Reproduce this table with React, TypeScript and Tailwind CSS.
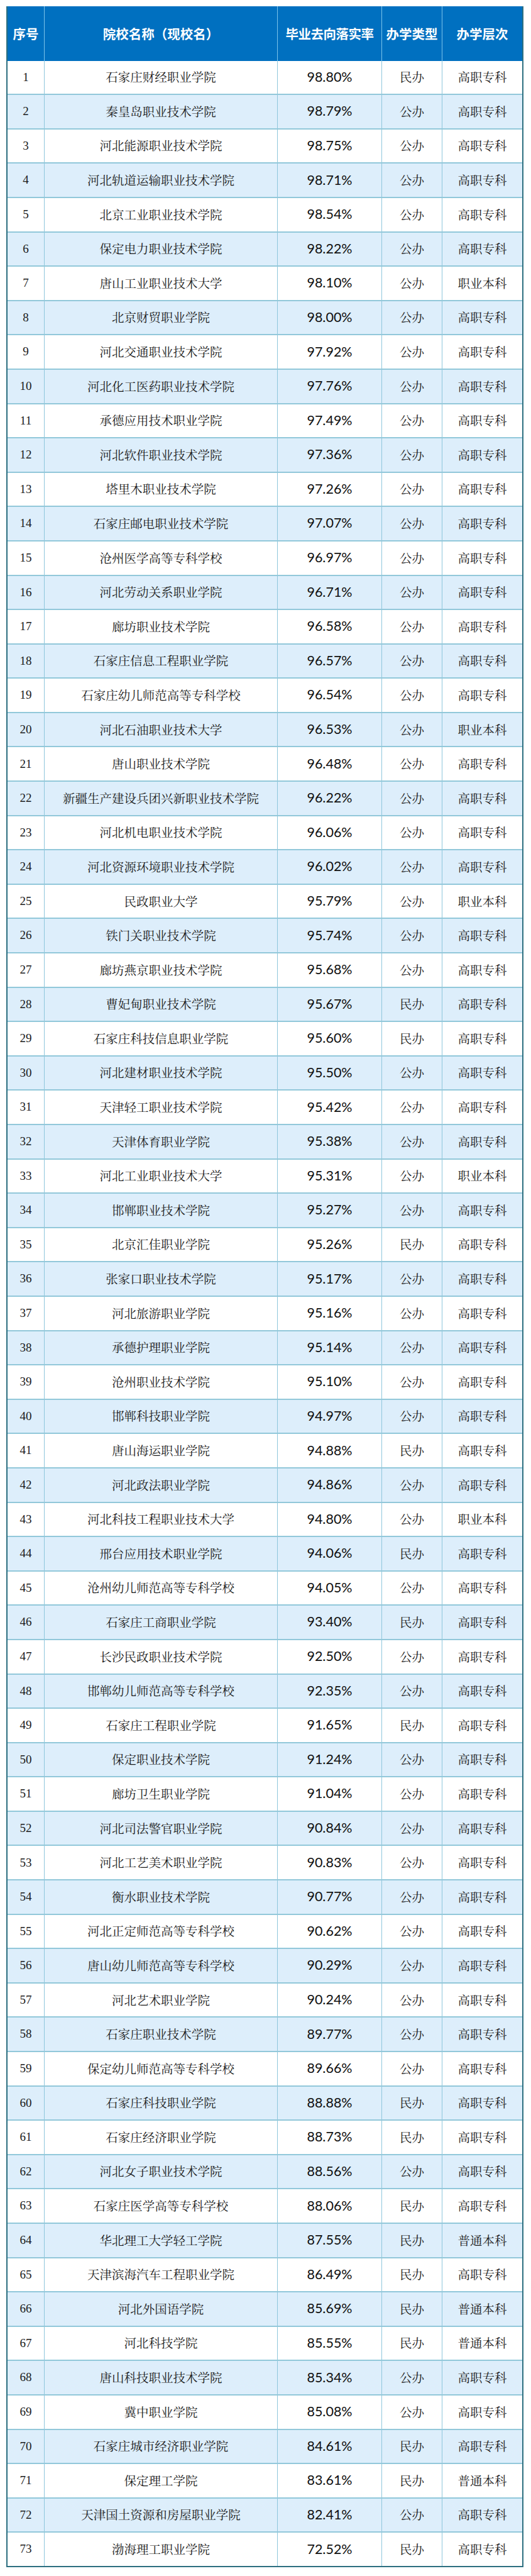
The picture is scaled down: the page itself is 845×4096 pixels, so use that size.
import React from "react";

type Row = [string, string, string, string];

const rows: Row[] = [
  ["石家庄财经职业学院", "98.80%", "民办", "高职专科"],
  ["秦皇岛职业技术学院", "98.79%", "公办", "高职专科"],
  ["河北能源职业技术学院", "98.75%", "公办", "高职专科"],
  ["河北轨道运输职业技术学院", "98.71%", "公办", "高职专科"],
  ["北京工业职业技术学院", "98.54%", "公办", "高职专科"],
  ["保定电力职业技术学院", "98.22%", "公办", "高职专科"],
  ["唐山工业职业技术大学", "98.10%", "公办", "职业本科"],
  ["北京财贸职业学院", "98.00%", "公办", "高职专科"],
  ["河北交通职业技术学院", "97.92%", "公办", "高职专科"],
  ["河北化工医药职业技术学院", "97.76%", "公办", "高职专科"],
  ["承德应用技术职业学院", "97.49%", "公办", "高职专科"],
  ["河北软件职业技术学院", "97.36%", "公办", "高职专科"],
  ["塔里木职业技术学院", "97.26%", "公办", "高职专科"],
  ["石家庄邮电职业技术学院", "97.07%", "公办", "高职专科"],
  ["沧州医学高等专科学校", "96.97%", "公办", "高职专科"],
  ["河北劳动关系职业学院", "96.71%", "公办", "高职专科"],
  ["廊坊职业技术学院", "96.58%", "公办", "高职专科"],
  ["石家庄信息工程职业学院", "96.57%", "公办", "高职专科"],
  ["石家庄幼儿师范高等专科学校", "96.54%", "公办", "高职专科"],
  ["河北石油职业技术大学", "96.53%", "公办", "职业本科"],
  ["唐山职业技术学院", "96.48%", "公办", "高职专科"],
  ["新疆生产建设兵团兴新职业技术学院", "96.22%", "公办", "高职专科"],
  ["河北机电职业技术学院", "96.06%", "公办", "高职专科"],
  ["河北资源环境职业技术学院", "96.02%", "公办", "高职专科"],
  ["民政职业大学", "95.79%", "公办", "职业本科"],
  ["铁门关职业技术学院", "95.74%", "公办", "高职专科"],
  ["廊坊燕京职业技术学院", "95.68%", "公办", "高职专科"],
  ["曹妃甸职业技术学院", "95.67%", "民办", "高职专科"],
  ["石家庄科技信息职业学院", "95.60%", "民办", "高职专科"],
  ["河北建材职业技术学院", "95.50%", "公办", "高职专科"],
  ["天津轻工职业技术学院", "95.42%", "公办", "高职专科"],
  ["天津体育职业学院", "95.38%", "公办", "高职专科"],
  ["河北工业职业技术大学", "95.31%", "公办", "职业本科"],
  ["邯郸职业技术学院", "95.27%", "公办", "高职专科"],
  ["北京汇佳职业学院", "95.26%", "民办", "高职专科"],
  ["张家口职业技术学院", "95.17%", "公办", "高职专科"],
  ["河北旅游职业学院", "95.16%", "公办", "高职专科"],
  ["承德护理职业学院", "95.14%", "公办", "高职专科"],
  ["沧州职业技术学院", "95.10%", "公办", "高职专科"],
  ["邯郸科技职业学院", "94.97%", "公办", "高职专科"],
  ["唐山海运职业学院", "94.88%", "民办", "高职专科"],
  ["河北政法职业学院", "94.86%", "公办", "高职专科"],
  ["河北科技工程职业技术大学", "94.80%", "公办", "职业本科"],
  ["邢台应用技术职业学院", "94.06%", "民办", "高职专科"],
  ["沧州幼儿师范高等专科学校", "94.05%", "公办", "高职专科"],
  ["石家庄工商职业学院", "93.40%", "民办", "高职专科"],
  ["长沙民政职业技术学院", "92.50%", "公办", "高职专科"],
  ["邯郸幼儿师范高等专科学校", "92.35%", "公办", "高职专科"],
  ["石家庄工程职业学院", "91.65%", "民办", "高职专科"],
  ["保定职业技术学院", "91.24%", "公办", "高职专科"],
  ["廊坊卫生职业学院", "91.04%", "公办", "高职专科"],
  ["河北司法警官职业学院", "90.84%", "公办", "高职专科"],
  ["河北工艺美术职业学院", "90.83%", "公办", "高职专科"],
  ["衡水职业技术学院", "90.77%", "公办", "高职专科"],
  ["河北正定师范高等专科学校", "90.62%", "公办", "高职专科"],
  ["唐山幼儿师范高等专科学校", "90.29%", "公办", "高职专科"],
  ["河北艺术职业学院", "90.24%", "公办", "高职专科"],
  ["石家庄职业技术学院", "89.77%", "公办", "高职专科"],
  ["保定幼儿师范高等专科学校", "89.66%", "公办", "高职专科"],
  ["石家庄科技职业学院", "88.88%", "民办", "高职专科"],
  ["石家庄经济职业学院", "88.73%", "民办", "高职专科"],
  ["河北女子职业技术学院", "88.56%", "公办", "高职专科"],
  ["石家庄医学高等专科学校", "88.06%", "民办", "高职专科"],
  ["华北理工大学轻工学院", "87.55%", "民办", "普通本科"],
  ["天津滨海汽车工程职业学院", "86.49%", "民办", "高职专科"],
  ["河北外国语学院", "85.69%", "民办", "普通本科"],
  ["河北科技学院", "85.55%", "民办", "普通本科"],
  ["唐山科技职业技术学院", "85.34%", "公办", "高职专科"],
  ["冀中职业学院", "85.08%", "公办", "高职专科"],
  ["石家庄城市经济职业学院", "84.61%", "民办", "高职专科"],
  ["保定理工学院", "83.61%", "民办", "普通本科"],
  ["天津国土资源和房屋职业学院", "82.41%", "公办", "高职专科"],
  ["渤海理工职业学院", "72.52%", "民办", "高职专科"],
];

const grid =
  "grid grid-cols-[59px_371px_166px_96px_1fr]";
const cjkSerif =
  "font-['Noto_Serif_CJK_SC','Noto_Sans_CJK_SC',serif]";

export default function App() {
  return (
    <div className="bg-white w-[845px] pt-[10px] pl-[10px] pb-[12px]">
      <div className="w-[823px] border-x-2 border-b-2 border-[#2d6f80]">
        <div
          className={`${grid} h-[86.6px] bg-[#0070c0] text-white font-bold text-[20.5px] font-['Noto_Sans_CJK_SC',sans-serif]`}
        >
          <div className="flex items-center justify-center border-r border-[#7cc3ea]">序号</div>
          <div className="flex items-center justify-center border-r border-[#7cc3ea]">院校名称（现校名）</div>
          <div className="flex items-center justify-center border-r border-[#7cc3ea] whitespace-nowrap tracking-[-0.5px]">毕业去向落实率</div>
          <div className="flex items-center justify-center border-r border-[#7cc3ea] whitespace-nowrap">办学类型</div>
          <div className="flex items-center justify-center">办学层次</div>
        </div>
        {rows.map((r, i) => (
          <div
            key={i}
            className={`${grid} h-[54.6px] border-b-2 border-[#92c8da] last:border-b-0 last:h-[52.6px] text-[#1a1a1a] ${
              i % 2 === 1 ? "bg-[#ddeefb]" : "bg-white"
            }`}
          >
            <div className="flex items-center justify-center border-r border-[#8ec6dc] font-['Liberation_Serif',serif] text-[19px]">
              {i + 1}
            </div>
            <div className={`flex items-center justify-center border-r border-[#8ec6dc] ${cjkSerif} text-[19.5px] whitespace-nowrap`}>
              {r[0]}
            </div>
            <div className="flex items-center justify-center border-r border-[#8ec6dc] font-['Lato',sans-serif] text-[21.5px] text-[#111] pb-[2px]">
              {r[1]}
            </div>
            <div className={`flex items-center justify-center border-r border-[#8ec6dc] ${cjkSerif} text-[19.5px]`}>
              {r[2]}
            </div>
            <div className={`flex items-center justify-center ${cjkSerif} text-[19.5px]`}>
              {r[3]}
            </div>
          </div>
        ))}
      </div>
    </div>
  );
}
